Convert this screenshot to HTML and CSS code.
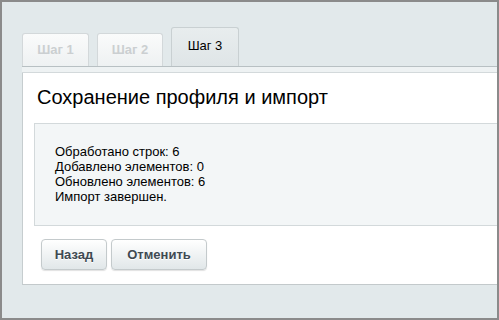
FILE: index.html
```html
<!DOCTYPE html>
<html lang="ru">
<head>
<meta charset="utf-8">
<link rel="stylesheet" href="styles.css">
</head>
<body>
<div class="frame">
  <div class="tabs">
    <div class="tab">Шаг 1</div>
    <div class="tab">Шаг 2</div>
    <div class="tab tab-active">Шаг 3</div>
  </div>
  <div class="panel">
    <div class="strip"></div>
    <div class="panel-body">
      <h1 class="title">Сохранение профиля и импорт</h1>
      <div class="result">
        <div>Обработано строк: 6</div>
        <div>Добавлено элементов: 0</div>
        <div>Обновлено элементов: 6</div>
        <div>Импорт завершен.</div>
      </div>
      <div class="buttons">
        <button class="btn btn-back">Назад</button>
        <button class="btn btn-cancel">Отменить</button>
      </div>
    </div>
  </div>
</div>
</body>
</html>
```

FILE: styles.css
```css
* { box-sizing: border-box; }
html, body { margin: 0; padding: 0; }
body {
  width: 499px;
  height: 320px;
  overflow: hidden;
  font-family: "Liberation Sans", Arial, sans-serif;
}
.frame {
  width: 499px;
  height: 320px;
  border: 2px solid #8b8b8b;
  background: #e2e9eb;
  padding: 25px 0 0 20px;
}
.tabs {
  display: flex;
  align-items: flex-end;
  gap: 8px;
  height: 39px;
}
.tab {
  width: 67px;
  height: 33px;
  border: 1px solid #d3d8da;
  border-bottom: none;
  border-radius: 3px 3px 0 0;
  background: linear-gradient(#fafbfb, #eef1f2);
  color: #cbcfd1;
  font-weight: bold;
  font-size: 13px;
  display: flex;
  align-items: center;
  justify-content: center;
  padding-bottom: 1px;
}
.tab:nth-child(2) { width: 66px; }
.tab-active {
  width: 68px;
  height: 39px;
  background: linear-gradient(#e8edee, #dfe5e7);
  border-color: #c9d0d2;
  color: #000;
  font-weight: normal;
  padding-bottom: 3px;
}
.panel {
  background: #fff;
  border-left: 1px solid #c6cdcf;
  border-bottom: 1px solid #c3c9cb;
}
.strip {
  height: 7px;
  margin-left: -1px;
  background: #eef2f3;
  border-top: 1px solid #b8c0c3;
  border-bottom: 1px solid #d3d9db;
}
.panel-body {
  padding: 12px 0 14px 11px;
}
.title {
  margin: 0 0 0 3px;
  font-weight: normal;
  font-size: 20px;
  line-height: 24px;
  color: #000;
}
.result {
  margin-top: 14px;
  background: #f3f6f7;
  border: 1px solid #d3d9db;
  border-right: none;
  height: 103px;
  padding: 20px 0 0 20px;
  font-size: 13px;
  line-height: 15px;
  color: #000;
}
.buttons {
  display: flex;
  gap: 4px;
  margin: 13px 0 0 7px;
}
.btn {
  height: 31px;
  border: 1px solid #c4cacc;
  border-radius: 4px;
  background: linear-gradient(#ffffff, #e1e7e9);
  box-shadow: 0 1px 1px rgba(0,0,0,0.12);
  font-family: "Liberation Sans", Arial, sans-serif;
  font-weight: bold;
  font-size: 13px;
  color: #3f4a52;
  text-shadow: 0 1px 0 #fff;
  padding: 0;
}
.btn-back { width: 66px; }
.btn-cancel { width: 96px; }
```
